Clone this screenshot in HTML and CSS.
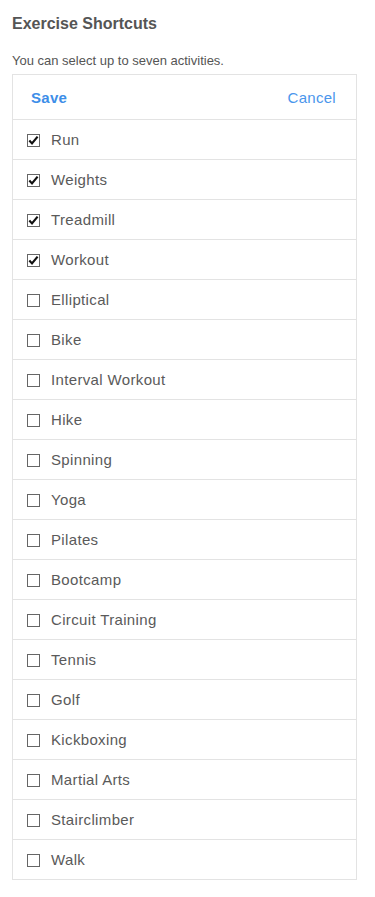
FILE: index.html
```html
<!DOCTYPE html>
<html>
<head>
<meta charset="utf-8">
<link rel="stylesheet" href="styles.css">
</head>
<body>
<div class="page">
  <h1 class="title">Exercise Shortcuts</h1>
  <p class="sub">You can select up to seven activities.</p>
  <div class="box">
    <div class="head"><span class="save">Save</span><span class="cancel">Cancel</span></div>
    <ul class="list">
      <li class="row"><span class="cb on"><svg viewBox="0 0 13 13"><path d="M2.3 6.6 L5 9.4 L10.6 2.6" /></svg></span>Run</li>
      <li class="row"><span class="cb on"><svg viewBox="0 0 13 13"><path d="M2.3 6.6 L5 9.4 L10.6 2.6" /></svg></span>Weights</li>
      <li class="row"><span class="cb on"><svg viewBox="0 0 13 13"><path d="M2.3 6.6 L5 9.4 L10.6 2.6" /></svg></span>Treadmill</li>
      <li class="row"><span class="cb on"><svg viewBox="0 0 13 13"><path d="M2.3 6.6 L5 9.4 L10.6 2.6" /></svg></span>Workout</li>
      <li class="row"><span class="cb"></span>Elliptical</li>
      <li class="row"><span class="cb"></span>Bike</li>
      <li class="row"><span class="cb"></span>Interval Workout</li>
      <li class="row"><span class="cb"></span>Hike</li>
      <li class="row"><span class="cb"></span>Spinning</li>
      <li class="row"><span class="cb"></span>Yoga</li>
      <li class="row"><span class="cb"></span>Pilates</li>
      <li class="row"><span class="cb"></span>Bootcamp</li>
      <li class="row"><span class="cb"></span>Circuit Training</li>
      <li class="row"><span class="cb"></span>Tennis</li>
      <li class="row"><span class="cb"></span>Golf</li>
      <li class="row"><span class="cb"></span>Kickboxing</li>
      <li class="row"><span class="cb"></span>Martial Arts</li>
      <li class="row"><span class="cb"></span>Stairclimber</li>
      <li class="row"><span class="cb"></span>Walk</li>
    </ul>
  </div>
</div>
</body>
</html>
```
FILE: styles.css
```css
html, body {
  margin: 0;
  padding: 0;
  background: #fff;
}
body {
  font-family: "Liberation Sans", Arial, sans-serif;
  color: #555;
}
.page {
  padding: 12px 0 16px 12px;
}
.title {
  margin: 0;
  font-size: 16px;
  line-height: 24px;
  font-weight: bold;
  color: #555;
}
.sub {
  margin: 17px 0 0 0;
  font-size: 13px;
  line-height: 16px;
  color: #555;
}
.box {
  margin-top: 5px;
  width: 343px;
  border: 1px solid #e3e3e3;
}
.head {
  height: 44px;
  display: flex;
  align-items: center;
  justify-content: space-between;
  padding: 0 20px 0 18px;
  font-size: 15px;
  letter-spacing: 0.3px;
}
.save {
  font-weight: bold;
  color: #3d8ee8;
}
.cancel {
  color: #4a96ec;
}
.list {
  list-style: none;
  margin: 0;
  padding: 0;
}
.row {
  height: 39px;
  border-top: 1px solid #e3e3e3;
  display: flex;
  align-items: center;
  padding-left: 14px;
  font-size: 15px;
  letter-spacing: 0.35px;
  color: #5a5a5a;
}
.cb {
  box-sizing: border-box;
  width: 13px;
  height: 13px;
  border: 1px solid #666;
  margin-right: 11px;
  margin-top: 2px;
  position: relative;
  flex: none;
}
.cb svg {
  position: absolute;
  left: -1px;
  top: -1px;
  width: 13px;
  height: 13px;
}
.cb svg path {
  fill: none;
  stroke: #111;
  stroke-width: 2.2;
}
```
